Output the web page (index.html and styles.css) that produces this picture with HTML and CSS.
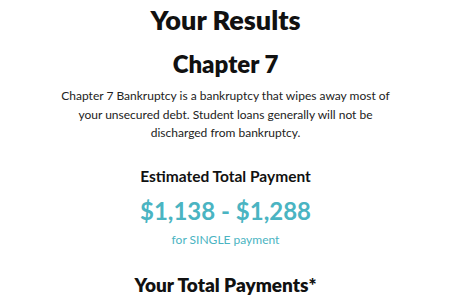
FILE: index.html
```html
<!DOCTYPE html>
<html lang="en">
<head>
    <meta charset="UTF-8">
    <meta name="viewport" content="width=device-width, initial-scale=1.0">
    <title>Your Results</title>
    <link rel="stylesheet" href="styles.css">
</head>
<body>
    <div class="results">
        <h1 class="results-title">Your Results</h1>
        <h2 class="chapter-title">Chapter 7</h2>
        <p class="chapter-desc">Chapter 7 Bankruptcy is a bankruptcy that wipes away most of your unsecured debt. Student loans generally will not be discharged from bankruptcy.</p>

        <div class="estimate">
            <h3 class="estimate-label">Estimated Total Payment</h3>
            <div class="estimate-range">$1,138 - $1,288</div>
            <div class="estimate-note">for SINGLE payment</div>
        </div>

        <h2 class="payments-title">Your Total Payments*</h2>
    </div>
</body>
</html>
```

FILE: styles.css
```css
* {
    margin: 0;
    padding: 0;
    box-sizing: border-box;
}

body {
    font-family: 'Lato', 'Noto Sans', sans-serif;
    background-color: #fff;
    color: #111;
}

.results {
    max-width: 451px;
    margin: 0 auto;
    padding: 3px 20px 0;
    text-align: center;
}

.results-title {
    font-size: 27px;
    font-weight: 800;
    line-height: 34px;
}

.chapter-title {
    font-size: 24px;
    font-weight: 800;
    line-height: 30px;
    margin-top: 12px;
}

.chapter-desc {
    font-size: 12px;
    line-height: 18.5px;
    color: #222;
    margin: 8px auto 0;
    max-width: 345px;
}

.estimate {
    margin-top: 23px;
}

.estimate-label {
    font-size: 15.5px;
    font-weight: 700;
    line-height: 20px;
}

.estimate-range {
    font-size: 24px;
    font-weight: 700;
    line-height: 30px;
    color: #4ab4c2;
    margin-top: 10px;
}

.estimate-note {
    font-size: 12px;
    color: #4ab4c2;
    line-height: 16px;
    margin-top: 6px;
}

.payments-title {
    font-size: 19px;
    font-weight: 800;
    line-height: 24px;
    margin-top: 25px;
}
```
